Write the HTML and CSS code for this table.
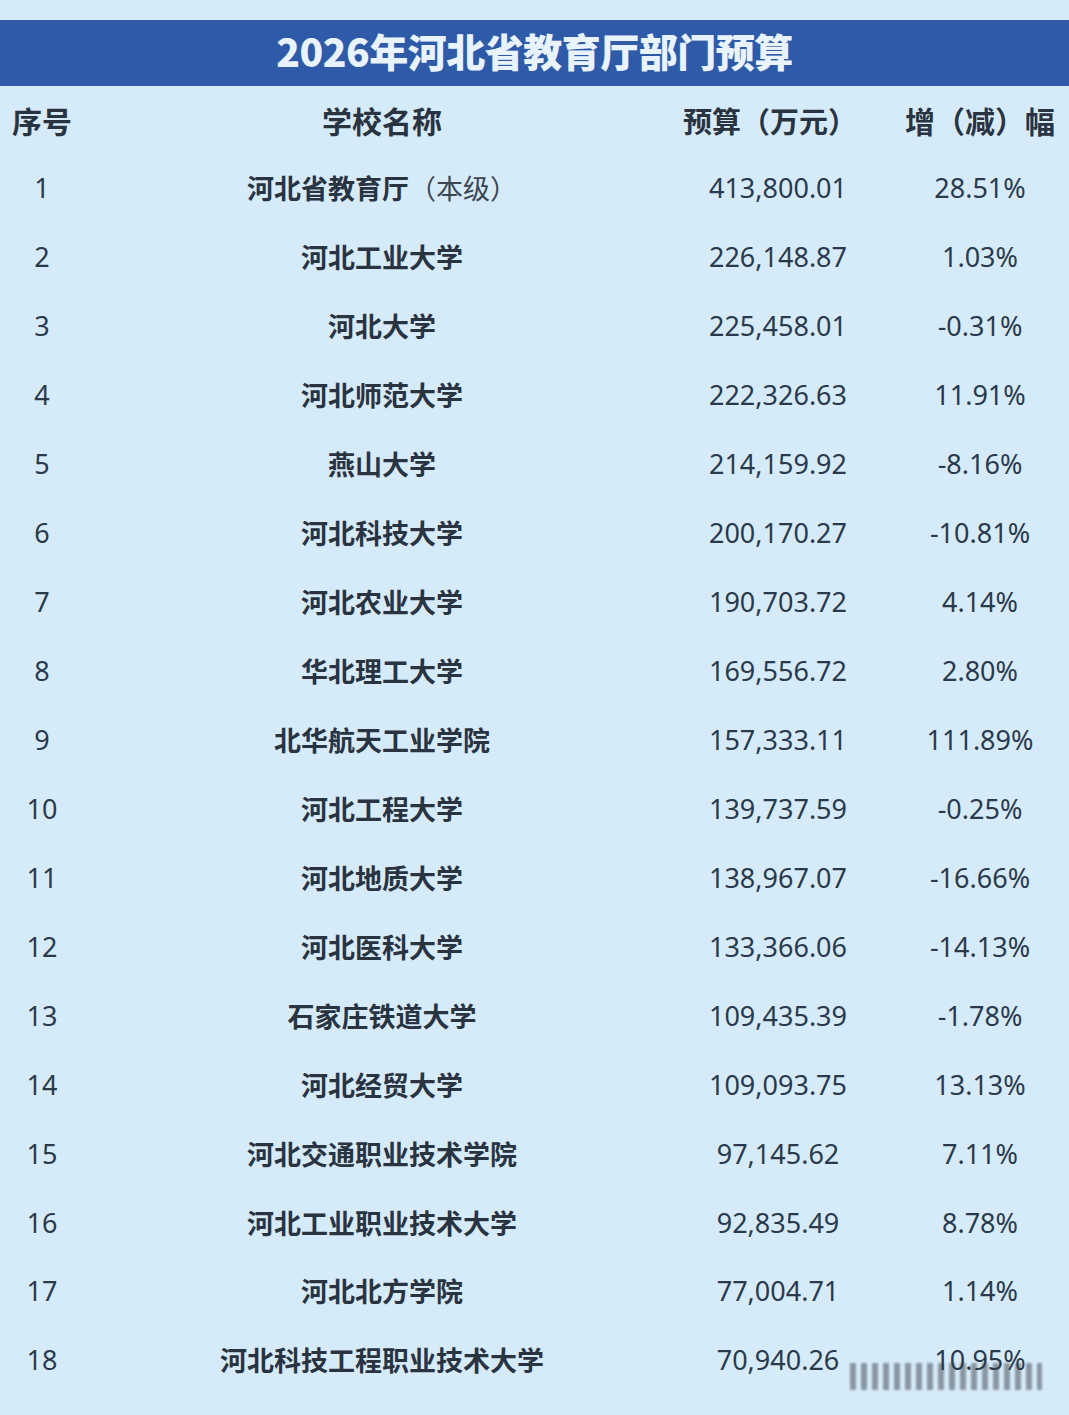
FILE: index.html
```html
<!DOCTYPE html>
<html lang="zh-CN">
<head>
<meta charset="utf-8">
<title>2026年河北省教育厅部门预算</title>
<link rel="stylesheet" href="styles.css">
</head>
<body>
<div class="page">
  <div class="title">2026年河北省教育厅部门预算</div>
  <div class="table">
    <div class="row head">
      <div class="c1">序号</div>
      <div class="c2">学校名称</div>
      <div class="c3 h3">预算（万元）</div>
      <div class="c4">增（减）幅</div>
    </div>
    <div class="row"><div class="c1">1</div><div class="c2 name">河北省教育厅<span class="sub">（本级）</span></div><div class="c3">413,800.01</div><div class="c4">28.51%</div></div>
    <div class="row"><div class="c1">2</div><div class="c2 name">河北工业大学</div><div class="c3">226,148.87</div><div class="c4">1.03%</div></div>
    <div class="row"><div class="c1">3</div><div class="c2 name">河北大学</div><div class="c3">225,458.01</div><div class="c4">-0.31%</div></div>
    <div class="row"><div class="c1">4</div><div class="c2 name">河北师范大学</div><div class="c3">222,326.63</div><div class="c4">11.91%</div></div>
    <div class="row"><div class="c1">5</div><div class="c2 name">燕山大学</div><div class="c3">214,159.92</div><div class="c4">-8.16%</div></div>
    <div class="row"><div class="c1">6</div><div class="c2 name">河北科技大学</div><div class="c3">200,170.27</div><div class="c4">-10.81%</div></div>
    <div class="row"><div class="c1">7</div><div class="c2 name">河北农业大学</div><div class="c3">190,703.72</div><div class="c4">4.14%</div></div>
    <div class="row"><div class="c1">8</div><div class="c2 name">华北理工大学</div><div class="c3">169,556.72</div><div class="c4">2.80%</div></div>
    <div class="row"><div class="c1">9</div><div class="c2 name">北华航天工业学院</div><div class="c3">157,333.11</div><div class="c4">111.89%</div></div>
    <div class="row"><div class="c1">10</div><div class="c2 name">河北工程大学</div><div class="c3">139,737.59</div><div class="c4">-0.25%</div></div>
    <div class="row"><div class="c1">11</div><div class="c2 name">河北地质大学</div><div class="c3">138,967.07</div><div class="c4">-16.66%</div></div>
    <div class="row"><div class="c1">12</div><div class="c2 name">河北医科大学</div><div class="c3">133,366.06</div><div class="c4">-14.13%</div></div>
    <div class="row"><div class="c1">13</div><div class="c2 name">石家庄铁道大学</div><div class="c3">109,435.39</div><div class="c4">-1.78%</div></div>
    <div class="row"><div class="c1">14</div><div class="c2 name">河北经贸大学</div><div class="c3">109,093.75</div><div class="c4">13.13%</div></div>
    <div class="row"><div class="c1">15</div><div class="c2 name">河北交通职业技术学院</div><div class="c3">97,145.62</div><div class="c4">7.11%</div></div>
    <div class="row"><div class="c1">16</div><div class="c2 name">河北工业职业技术大学</div><div class="c3">92,835.49</div><div class="c4">8.78%</div></div>
    <div class="row"><div class="c1">17</div><div class="c2 name">河北北方学院</div><div class="c3">77,004.71</div><div class="c4">1.14%</div></div>
    <div class="row last"><div class="c1">18</div><div class="c2 name">河北科技工程职业技术大学</div><div class="c3">70,940.26</div><div class="c4">10.95%</div>
      <div class="mark"></div>
    </div>
  </div>
</div>
</body>
</html>
```

FILE: styles.css
```css
html, body {
  margin: 0;
  padding: 0;
  background: #d6ebfa;
}
.page {
  width: 1069px;
  height: 1415px;
  padding-top: 20px;
  box-sizing: border-box;
  overflow: hidden;
  font-family: "Noto Sans", "Open Sans", "Noto Sans CJK SC", sans-serif;
  color: #2b3a4a;
}
.title {
  height: 66px;
  box-sizing: border-box;
  padding-bottom: 5px;
  background: #2e5aa7;
  color: #e9f3fc;
  font-family: "Noto Sans CJK SC", sans-serif;
  font-weight: 900;
  font-size: 39px;
  line-height: 61px;
  text-align: center;
  letter-spacing: -0.5px;
}
.table {
  display: flex;
  flex-direction: column;
}
.row {
  position: relative;
  display: grid;
  grid-template-columns: 84px 596px 196px 1fr;
  height: 68.95px;
  align-items: center;
  font-size: 27px;
  text-align: center;
}
.row.head {
  height: 67.5px;
  font-family: "Noto Sans CJK SC", sans-serif;
  font-weight: 700;
  font-size: 30px;
  color: #2a3340;
}
.c4 {
  padding-left: 15px;
}
.h3 {
  padding-right: 16px;
  font-size: 29px;
}
.name {
  font-family: "Noto Sans CJK SC", sans-serif;
  font-weight: 700;
  font-size: 27px;
  color: #2a3340;
}
.sub {
  font-weight: 400;
  color: #3c4651;
}
.mark {
  position: absolute;
  left: 850px;
  top: 38px;
  width: 192px;
  height: 27px;
  background: repeating-linear-gradient(90deg, rgba(55,60,66,0.6) 0 6px, rgba(214,235,250,0) 6px 11px);
  filter: blur(1.2px);
  opacity: 0.8;
}
```
